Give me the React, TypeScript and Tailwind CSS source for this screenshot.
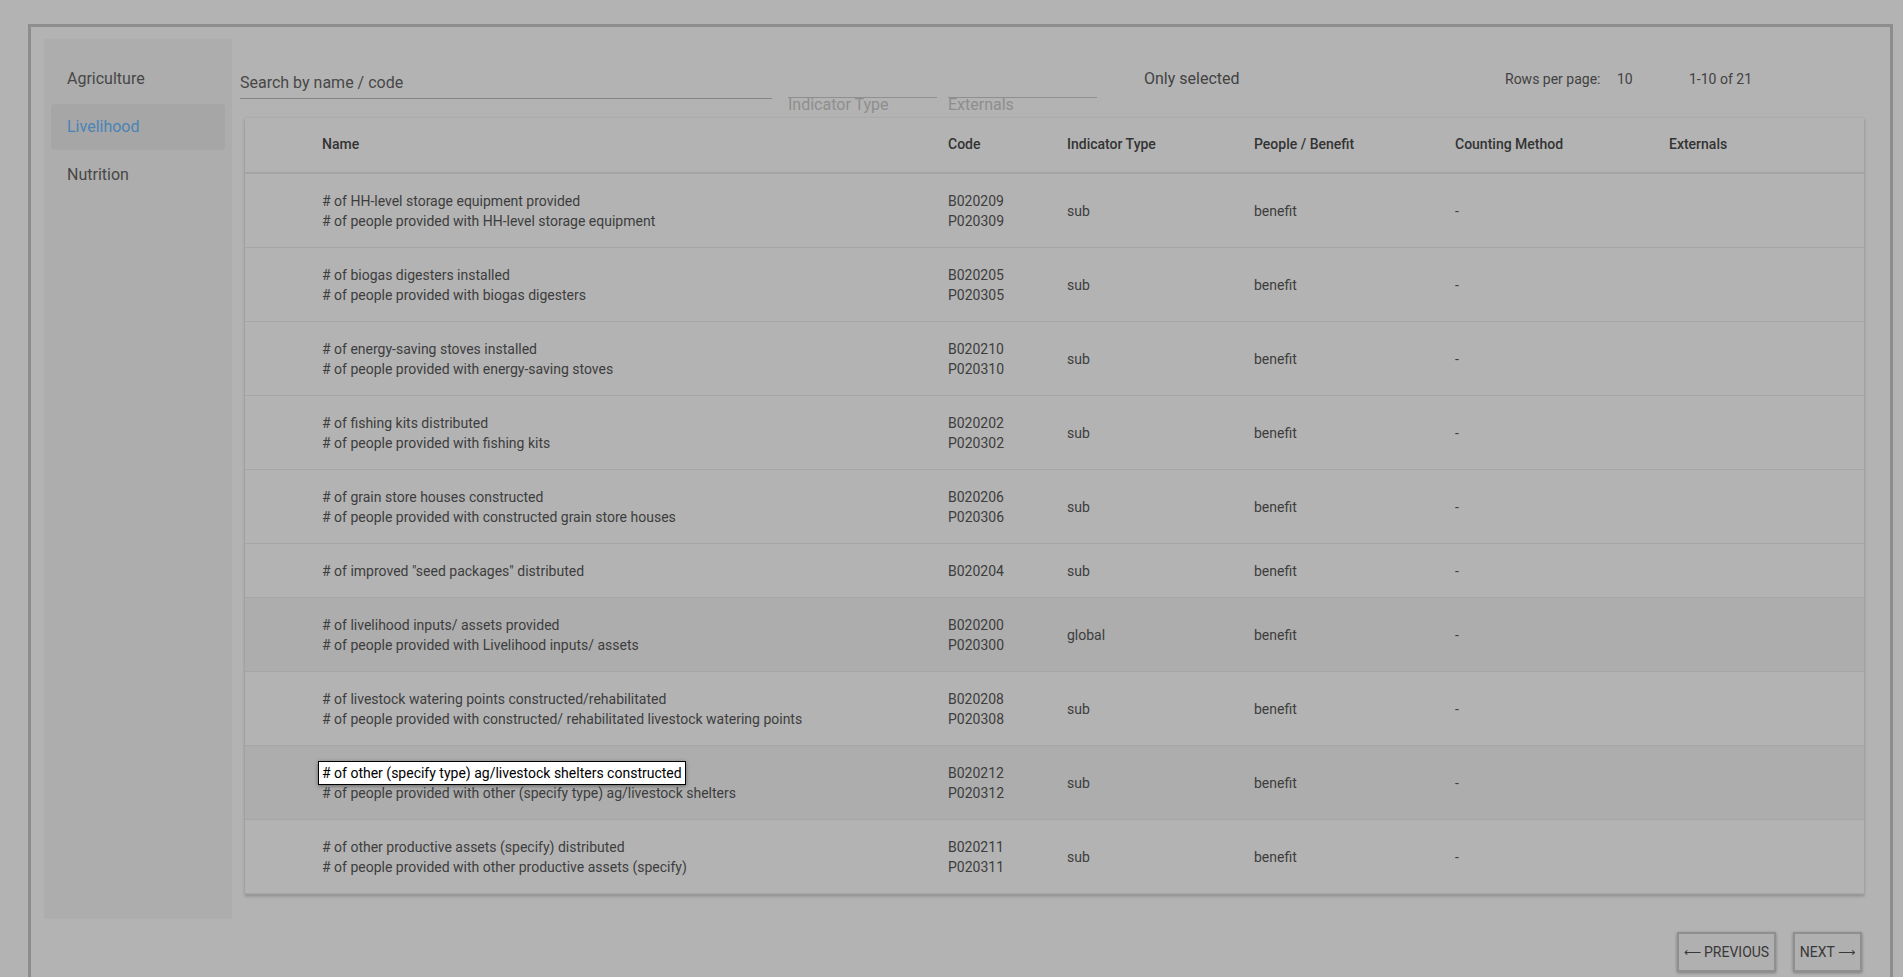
import React from "react";

type Row = {
  names: string[];
  codes: string[];
  type: string;
  dark?: boolean;
  tip?: boolean;
};

const rows: Row[] = [
  {
    names: ["# of HH-level storage equipment provided", "# of people provided with HH-level storage equipment"],
    codes: ["B020209", "P020309"],
    type: "sub",
  },
  {
    names: ["# of biogas digesters installed", "# of people provided with biogas digesters"],
    codes: ["B020205", "P020305"],
    type: "sub",
  },
  {
    names: ["# of energy-saving stoves installed", "# of people provided with energy-saving stoves"],
    codes: ["B020210", "P020310"],
    type: "sub",
  },
  {
    names: ["# of fishing kits distributed", "# of people provided with fishing kits"],
    codes: ["B020202", "P020302"],
    type: "sub",
  },
  {
    names: ["# of grain store houses constructed", "# of people provided with constructed grain store houses"],
    codes: ["B020206", "P020306"],
    type: "sub",
  },
  {
    names: ['# of improved "seed packages" distributed'],
    codes: ["B020204"],
    type: "sub",
  },
  {
    names: ["# of livelihood inputs/ assets provided", "# of people provided with Livelihood inputs/ assets"],
    codes: ["B020200", "P020300"],
    type: "global",
    dark: true,
  },
  {
    names: [
      "# of livestock watering points constructed/rehabilitated",
      "# of people provided with constructed/ rehabilitated livestock watering points",
    ],
    codes: ["B020208", "P020308"],
    type: "sub",
  },
  {
    names: [
      "# of other (specify type) ag/livestock shelters constructed",
      "# of people provided with other (specify type) ag/livestock shelters",
    ],
    codes: ["B020212", "P020312"],
    type: "sub",
    dark: true,
    tip: true,
  },
  {
    names: ["# of other productive assets (specify) distributed", "# of people provided with other productive assets (specify)"],
    codes: ["B020211", "P020311"],
    type: "sub",
  },
];

const cols = "grid grid-cols-[77px_626px_119px_187px_201px_214px_1fr]";

function Sidebar() {
  const items = ["Agriculture", "Livelihood", "Nutrition"];
  return (
    <div className="w-[188px] h-[880px] shrink-0 bg-[#adadad] pt-[17px] px-[7px] flex flex-col gap-[2px]">
      {items.map((item) => (
        <div
          key={item}
          className={
            item === "Livelihood"
              ? "h-[46px] rounded-[4px] bg-[#a6a6a6] pl-[16px] flex items-center text-[16px] text-[#4a83b6]"
              : "h-[46px] pl-[16px] flex items-center text-[16px] text-[#474747]"
          }
        >
          {item}
        </div>
      ))}
    </div>
  );
}

function Toolbar() {
  return (
    <div className="flex items-start h-[79px]">
      <div className="mt-[32px] w-[532px] border-b border-[#858585] pb-[3px] text-[16px] leading-[24px] text-[#474747]">
        Search by name / code
      </div>
      <div className="mt-[58px] ml-[16px] w-[149px] border-t border-[#8f8f8f] text-[16px] leading-[14px] text-[#8e8e8e]">
        Indicator Type
      </div>
      <div className="mt-[58px] ml-[11px] w-[149px] border-t border-[#8f8f8f] text-[16px] leading-[14px] text-[#8e8e8e]">
        Externals
      </div>
      <div className="mt-[28px] ml-[47px] w-[361px] text-[16px] leading-[24px] text-[#424242]">Only selected</div>
      <div className="mt-[29px] flex text-[14px] leading-[22px] text-[#424242]">
        <span className="w-[112px]">Rows per page:</span>
        <span className="w-[72px]">10</span>
        <span>1-10 of 21</span>
      </div>
    </div>
  );
}

function Table() {
  return (
    <div className="ml-[5px] w-[1619px] shadow-[0_1px_3px_rgba(0,0,0,0.25)] border-b border-[#9c9c9c]">
      <div className={`${cols} h-[56px] pb-[2px] items-center border-b-2 border-[#a4a4a4] text-[14px] font-medium text-[#333333]`}>
        <div />
        <div>Name</div>
        <div>Code</div>
        <div>Indicator Type</div>
        <div>People / Benefit</div>
        <div>Counting Method</div>
        <div>Externals</div>
      </div>
      {rows.map((r, i) => (
        <div
          key={i}
          className={`${cols} items-center pt-[17px] pb-[16px] border-b border-[#a6a6a6] text-[14px] leading-[20px] text-[#3d3d3d] ${
            r.dark ? "bg-[#adadad]" : ""
          }`}
        >
          <div />
          <div>
            {r.names.map((n, j) => (
              <div key={j} className="relative">
                {n}
                {r.tip && j === 0 && (
                  <span className="absolute -left-[4px] -top-[2px] whitespace-nowrap bg-white border border-black px-[3px] py-[1px] text-black shadow-[0_1px_4px_rgba(0,0,0,0.4)]">
                    {n}
                  </span>
                )}
              </div>
            ))}
          </div>
          <div>
            {r.codes.map((c) => (
              <div key={c}>{c}</div>
            ))}
          </div>
          <div>{r.type}</div>
          <div>benefit</div>
          <div>-</div>
          <div />
        </div>
      ))}
    </div>
  );
}

export default function App() {
  return (
    <div className="h-[977px] overflow-hidden bg-[#b3b3b3] pt-[24px] pl-[28px] font-['Roboto',sans-serif]">
      <div className="w-[1865px] h-[980px] border-[3px] border-b-0 border-[#8d8d8d] pt-[12px] pl-[13px] flex">
        <Sidebar />
        <div className="ml-[8px]">
          <Toolbar />
          <Table />
          <div className="mt-[37px] flex justify-end gap-[17px] w-[1622px]">
            <button className="w-[99px] h-[40px] border-2 border-[#8f8f8f] bg-[#b0b0b0] shadow-[0_1px_3px_rgba(0,0,0,0.3)] text-[14px] text-[#383838] flex items-center justify-center gap-[3px]">
              <span className="font-['DejaVu_Sans',sans-serif] text-[12px]">⟵</span>
              <span>PREVIOUS</span>
            </button>
            <button className="w-[69px] h-[40px] border-2 border-[#8f8f8f] bg-[#b0b0b0] shadow-[0_1px_3px_rgba(0,0,0,0.3)] text-[14px] text-[#383838] flex items-center justify-center gap-[3px]">
              <span>NEXT</span>
              <span className="font-['DejaVu_Sans',sans-serif] text-[12px]">⟶</span>
            </button>
          </div>
        </div>
      </div>
    </div>
  );
}
